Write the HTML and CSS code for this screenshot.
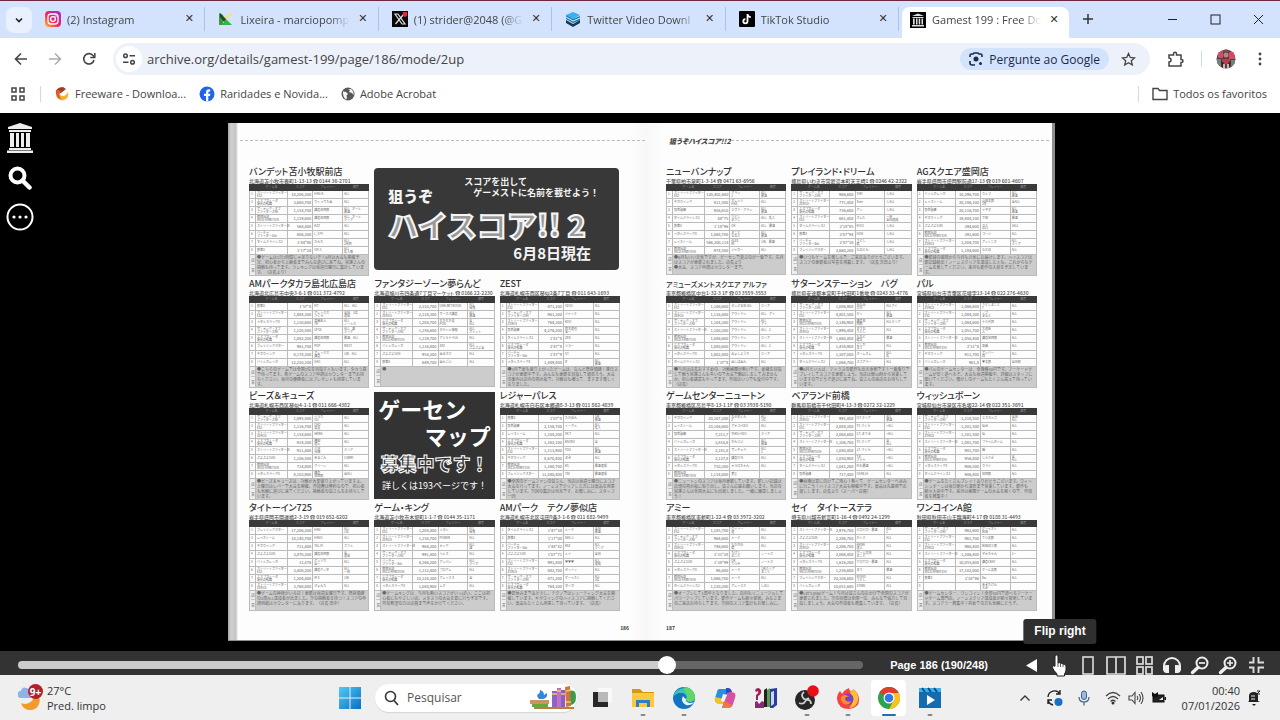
FILE: index.html
```
<!DOCTYPE html>
<html lang="pt-BR">
<head>
    <meta charset="UTF-8">
    <meta name="viewport" content="width=device-width, initial-scale=1.0">
    <title>Gamest 199 : Free Download</title>
    <link rel="stylesheet" href="styles.css">
</head>
<body>
    <!-- Tab strip -->
    <header class="tabstrip">
        <button class="tab-search" aria-label="Pesquisar guias"><svg width="10" height="10" viewBox="0 0 10 10"><path d="M2 3.5l3 3 3-3" fill="none" stroke="#222" stroke-width="1.6"/></svg></button>
        <nav class="tabs">
            <div class="tab">
                <svg width="16" height="16" viewBox="0 0 16 16"><defs><linearGradient id="ig" x1="0" y1="1" x2="1" y2="0"><stop offset="0" stop-color="#fdc02f"/><stop offset=".45" stop-color="#f5225c"/><stop offset="1" stop-color="#9b2be0"/></linearGradient></defs><rect width="16" height="16" rx="4" fill="url(#ig)"/><rect x="3" y="3" width="10" height="10" rx="3" fill="none" stroke="#fff" stroke-width="1.3"/><circle cx="8" cy="8" r="2.4" fill="none" stroke="#fff" stroke-width="1.3"/><circle cx="11" cy="5" r=".8" fill="#fff"/></svg>
                <a href="#" class="tab-title">(2) Instagram</a>
                <button class="tab-close" aria-label="Fechar"></button>
            </div>
            <div class="tab">
                <svg width="16" height="16" viewBox="0 0 16 16"><path d="M1 2l4 2v10H1z" fill="#3d9a3f"/><path d="M4 9l8-7h3L8 9z" fill="#f7e36a"/><path d="M4 14l4-6 6 6z" fill="#34b34a"/><path d="M2 2l6 6-2 3-4-5z" fill="#1d4f27"/></svg>
                <a href="#" class="tab-title">Lixeira - marciopomp</a>
                <button class="tab-close" aria-label="Fechar"></button>
            </div>
            <div class="tab">
                <svg width="16" height="16" viewBox="0 0 16 16"><rect width="16" height="16" fill="#080808"/><path d="M3 3h3l7 10h-3z" fill="none" stroke="#ddd" stroke-width="1.2"/><path d="M12 3L3.5 13" stroke="#ddd" stroke-width="1.3"/><path d="M11 1h4v4l-2 1-2-1z" fill="#e8243c"/></svg>
                <a href="#" class="tab-title">(1) strider@2048 (@G</a>
                <button class="tab-close" aria-label="Fechar"></button>
            </div>
            <div class="tab">
                <svg width="16" height="16" viewBox="0 0 16 16"><path d="M8 1l7 3-7 4-7-4z" fill="#35b3ee"/><path d="M1 4l7 4 7-3v4l-7 3-7-4z" fill="#1478ba"/><path d="M1 6l7 4 7-3" fill="none" stroke="#e3f3ff" stroke-width="1"/><path d="M1 9l7 4 7-4v3l-7 4-7-4z" fill="#123a5c"/></svg>
                <a href="#" class="tab-title">Twitter Video Downl</a>
                <button class="tab-close" aria-label="Fechar"></button>
            </div>
            <div class="tab">
                <svg width="16" height="16" viewBox="0 0 16 16"><rect width="16" height="16" rx="1" fill="#000"/><path d="M8.5 3v7.3a2.1 2.1 0 1 1-2.1-2.1M8.500 3.500q.8 2.500 3.300 2.600" fill="none" stroke="#fff" stroke-width="1.8"/></svg>
                <a href="#" class="tab-title">TikTok Studio</a>
                <button class="tab-close" aria-label="Fechar"></button>
            </div>
            <div class="tab active">
                <svg width="16" height="16" viewBox="0 0 16 16"><rect width="16" height="16" fill="#000"/><path d="M8 1.500l6 2.500H2zM2.500 5h11v1h-11zM3 6.500h1.700v6H3zM6 6.500h1.500v6H6zM8.700 6.500h1.500v6H8.700zM11.500 6.500H13v6h-1.500zM2 13h12v1.500H2z" fill="#ddd"/></svg>
                <a href="#" class="tab-title">Gamest 199 : Free Do</a>
                <button class="tab-close" aria-label="Fechar"></button>
            </div>
        </nav>
        <button class="new-tab" aria-label="Nova guia"><svg width="12" height="12" viewBox="0 0 12 12"><path d="M6 1v10M1 6h10" stroke="#333" stroke-width="1.500"/></svg></button>
        <div class="win-buttons">
            <button aria-label="Minimizar"><svg width="11" height="11" viewBox="0 0 11 11"><path d="M1 5.500h9" stroke="#222"/></svg></button>
            <button aria-label="Maximizar"><svg width="11" height="11" viewBox="0 0 11 11"><rect x="1" y="1" width="9" height="9" fill="none" stroke="#222"/></svg></button>
            <button aria-label="Fechar janela"><svg width="11" height="11" viewBox="0 0 11 11"><path d="M1 1l9 9M10 1l-9 9" stroke="#222"/></svg></button>
        </div>
    </header>

    <!-- Address bar -->
    <div class="toolbar">
        <button class="tool" aria-label="Voltar"><svg width="14" height="14" viewBox="0 0 14 14"><path d="M13 7H2M7 1.500L1.500 7 7 12.500" fill="none" stroke="#444" stroke-width="1.600"/></svg></button>
        <button class="tool" aria-label="Avançar"><svg width="14" height="14" viewBox="0 0 14 14"><path d="M1 7h11M7 1.500L12.500 7 7 12.500" fill="none" stroke="#aaa" stroke-width="1.500"/></svg></button>
        <button class="tool" aria-label="Recarregar"><svg width="14" height="14" viewBox="0 0 14 14"><path d="M12 8a5.200 5.200 0 1 1-1.200-4.700L12.500 5" fill="none" stroke="#444" stroke-width="1.600"/><path d="M12.800 1v4.500H8.300" fill="none" stroke="#444" stroke-width="1.500"/></svg></button>
        <div class="omnibox">
            <button class="site-info" aria-label="Informações do site"><svg width="14" height="14" viewBox="0 0 14 14"><g fill="none" stroke="#444" stroke-width="1.500"><circle cx="3.500" cy="3.800" r="1.800"/><path d="M7.500 3.800H13M1 10.200h5.500"/><circle cx="10.500" cy="10.200" r="1.800"/></g></svg></button>
            <input type="text" class="url" aria-label="Endereço" value="archive.org/details/gamest-199/page/186/mode/2up">
            <button class="ask"><svg width="14" height="14" viewBox="0 0 14 14"><g fill="none" stroke="#1b2a4a" stroke-width="1.600"><path d="M1 5V3.500Q1 2 2.500 2H4l1-1h4l1 1h1.500Q13 2 13 3.500V5M1 9v2q0 2 2 2h3"/></g><circle cx="7" cy="7" r="2.500" fill="#1b2a4a"/><circle cx="11.500" cy="11.500" r="1.500" fill="#1b2a4a"/></svg>Pergunte ao Google</button>
            <button class="star" aria-label="Favoritar"><svg width="15" height="15" viewBox="0 0 15 15"><path d="M7.500 1.500l1.800 4 4.300.4-3.300 2.900 1 4.200-3.800-2.300L3.700 13l1-4.200L1.400 5.900l4.300-.4z" fill="none" stroke="#444" stroke-width="1.300"/></svg></button>
        </div>
        <button class="tool ext" aria-label="Extensões"><svg width="17" height="17" viewBox="0 0 17 17"><path d="M2 4h4.500V2.800a1.500 1.500 0 0 1 3 0V4H14v4.500h.5a1.500 1.500 0 0 1 0 3H14V15H2v-4a2 2 0 0 0 0-4z" fill="none" stroke="#444" stroke-width="1.500"/></svg></button>
        <span class="divider"></span>
        <button class="tool avatar" aria-label="Perfil"><svg width="20" height="20" viewBox="0 0 20 20"><defs><clipPath id="av"><circle cx="10" cy="10" r="9.500"/></clipPath></defs><g clip-path="url(#av)"><rect width="20" height="20" fill="#5a3a40"/><path d="M2 2h5v7H2zM13 3h6v7h-6z" fill="#d24a66"/><path d="M7 0h6v3H7z" fill="#7a4a50"/><path d="M1 10h4v8H1zM15 11h4v7h-4z" fill="#6c8578"/><circle cx="10" cy="6" r="2.500" fill="#b98675"/><path d="M6 10h8v5H6z" fill="#b83b50"/><path d="M5 12l3 2-2 5zM15 12l-3 2 2 5z" fill="#2e2528"/><path d="M7 15h2v5H7zM11 15h2v5h-2z" fill="#cdb5a5"/></g></svg></button>
        <button class="tool menu" aria-label="Menu"><svg width="4" height="14" viewBox="0 0 4 14"><g fill="#444"><circle cx="2" cy="2" r="1.400"/><circle cx="2" cy="7" r="1.400"/><circle cx="2" cy="12" r="1.400"/></g></svg></button>
    </div>

    <!-- Bookmarks -->
    <nav class="bookmarks">
        <button class="apps" aria-label="Apps"><svg width="14" height="14" viewBox="0 0 14 14"><g fill="none" stroke="#444" stroke-width="1.500"><rect x="1" y="1" width="4" height="4"/><rect x="9" y="1" width="4" height="4"/><rect x="1" y="9" width="4" height="4"/><rect x="9" y="9" width="4" height="4"/></g></svg></button>
        <span class="divider"></span>
        <a href="#"><svg width="16" height="16" viewBox="0 0 16 16"><path d="M9 1C4 1 1 4 2 8l5-1 5-4z" fill="#a83a24"/><path d="M2 8c0 5 4 7 8 6s5-5 4-8c-2 4-5 5-8 3z" fill="#f2b530"/><path d="M3 4c-2 4 0 9 5 9-3-2-3-5-1-8z" fill="#e25f2c"/></svg>Freeware - Downloa...</a>
        <a href="#"><svg width="16" height="16" viewBox="0 0 16 16"><circle cx="8" cy="8" r="7.500" fill="#2065e8"/><path d="M7 15.500V10H5V7.700h2V6.200q0-2.900 2.900-2.900l1.300.1v2h-.9q-1 0-1 1v1.300h2L11 10H9.300v5.400z" fill="#fff"/></svg>Raridades e Novida...</a>
        <a href="#"><svg width="14" height="14" viewBox="0 0 14 14"><circle cx="7" cy="7" r="6.500" fill="#55585c"/><path d="M2 4.500l3 .5 2 2-1.500 1.500L6 11l-1 1.500Q1.500 10 2 4.500zM7 2l2 1-1 2 3 1 1.500 2Q13 4 10 2z" fill="#f6f6f6"/></svg>Adobe Acrobat</a>
        <span class="divider push"></span>
        <a href="#" class="all"><svg width="16" height="14" viewBox="0 0 16 14"><path d="M1 12.500V1.500h5l1.500 2H15v9z" fill="none" stroke="#444" stroke-width="1.400"/></svg>Todos os favoritos</a>
    </nav>

    <!-- Book reader -->
    <main class="reader">
        <aside class="side">
            <a href="#" aria-label="Internet Archive"><svg width="28" height="30" viewBox="0 0 28 30"><path d="M14 0l12 4v2H2V4zM3 7h22v2H3zM4 10h4v14H4zM10 10h3v14h-3zM15 10h3v14h-3zM20 10h4v14h-4zM3 25h22v2H3zM1 27.500h26V30H1z" fill="#eee"/></svg></a>
            <button aria-label="Pesquisar no livro"><svg width="24" height="24" viewBox="0 0 24 24"><circle cx="9.500" cy="9.500" r="7" fill="none" stroke="#fff" stroke-width="4"/><path d="M14.500 14.500l7 7" stroke="#fff" stroke-width="4.500" stroke-linecap="round"/></svg></button>
            <button aria-label="Mais opções"><svg width="28" height="28" viewBox="0 0 28 28"><circle cx="14" cy="14" r="12.500" fill="none" stroke="#fff" stroke-width="2"/><g fill="#fff"><circle cx="8" cy="14" r="1.600"/><circle cx="14" cy="14" r="1.600"/><circle cx="20" cy="14" r="1.600"/></g></svg></button>
        </aside>

        <div class="book" lang="ja">
            <section class="page page-left">
                <div class="page-head"><span class="rule"></span></div>
                <div class="shops" id="left">
                    <div class="banner">
                        <p class="banner-lead"><b>狙うぞ</b><span>スコアを出して<br>　ゲーメストに名前を載せよう！</span></p>
                        <h1>ハイスコア!! 2</h1>
                        <p class="banner-date">6月8日現在</p>
                    </div>
                    <div class="poster">
                        <p class="poster-big">ゲーセン</p>
                        <p class="poster-big right">マップ</p>
                        <p class="poster-outline">募集中です！</p>
                        <p class="poster-small">詳しくは193ページです！</p>
                    </div>
                </div>
                <div class="page-foot">186</div>
            </section>
            <section class="page page-right">
                <div class="page-head"><em>狙うぞハイスコア!!2</em><span class="rule"></span></div>
                <div class="shops" id="right"></div>
                <div class="page-foot">187</div>
            </section>
        </div>
    </main>

    <!-- Reader controls -->
    <div class="controls">
        <input type="range" class="scrub" min="1" max="248" value="192" aria-label="Página">
        <span class="page-label">Page 186 (190/248)</span>
        <div class="control-buttons">
            <button aria-label="Flip left"><svg width="20" height="20" viewBox="0 0 20 20"><path d="M15 4v13L4 10.500z" fill="#fff"/></svg></button>
            <button class="flip-right" aria-label="Flip right">
                <svg width="20" height="20" viewBox="0 0 20 20"><path d="M6 5v11l9-5.500z" fill="#fff"/></svg>
                <span class="tooltip">Flip right</span>
                <svg class="cursor" width="18" height="24" viewBox="0 0 18 24"><path d="M4 2q1.500-2 3 0V9q1.500-1 2.500.5 1.500-1 2.500.7 2.500-.7 3 1.800v4q0 2-1.500 4v2H6v-2q-3-3-5-7 .5-2 3-.8z" fill="#fff" stroke="#222"/><path d="M7 9v4M9.500 10v3M12 10.500V13" stroke="#333" stroke-width=".8"/></svg>
            </button>
            <button aria-label="One page"><svg width="20" height="20" viewBox="0 0 20 20"><rect x="5" y="2" width="10" height="17" fill="none" stroke="#ddd" stroke-width="1.600"/></svg></button>
            <button aria-label="Two pages"><svg width="20" height="20" viewBox="0 0 20 20"><path d="M1 2h18v17H1zM10 2v17" fill="none" stroke="#ddd" stroke-width="1.700"/></svg></button>
            <button aria-label="Thumbnails"><svg width="20" height="20" viewBox="0 0 20 20"><g fill="none" stroke="#ddd" stroke-width="1.700"><rect x="3" y="2" width="6" height="7"/><rect x="12" y="2" width="6" height="7"/><rect x="3" y="12" width="6" height="7"/><rect x="12" y="12" width="6" height="7"/></g></svg></button>
            <button aria-label="Read aloud"><svg width="20" height="20" viewBox="0 0 20 20"><path d="M2 15v-4a8 8 0 0 1 16 0v4" fill="none" stroke="#eee" stroke-width="2"/><path d="M4 10h3v8H4q-3-1-3-4 0-3 3-4zM16 10h-3v8h3q3-1 3-4 0-3-3-4z" fill="#eee"/></svg></button>
            <button aria-label="Zoom out"><svg width="20" height="20" viewBox="0 0 20 20"><circle cx="12" cy="8" r="5.500" fill="none" stroke="#eee" stroke-width="2"/><path d="M8 12.500L2.500 17.500" stroke="#eee" stroke-width="3.400" stroke-linecap="round"/><path d="M9 8h6" stroke="#eee" stroke-width="1.700"/></svg></button>
            <button aria-label="Zoom in"><svg width="20" height="20" viewBox="0 0 20 20"><circle cx="12" cy="8" r="5.500" fill="none" stroke="#eee" stroke-width="2"/><path d="M8 12.500L2.500 17.500" stroke="#eee" stroke-width="3.400" stroke-linecap="round"/><path d="M9 8h6M12 5v6" stroke="#eee" stroke-width="1.700"/></svg></button>
            <button aria-label="Exit fullscreen"><svg width="20" height="20" viewBox="0 0 20 20"><path d="M7.500 2v5.500H3M12.500 2v5.500H18M7.500 18v-5.500H3M12.500 18v-5.500H18" fill="none" stroke="#ddd" stroke-width="1.900"/></svg></button>
        </div>
    </div>

    <!-- Taskbar -->
    <footer class="taskbar">
        <button class="weather">
            <svg width="26" height="28" viewBox="0 0 26 28"><path d="M16 10a9 9 0 0 1-13 9 9.500 9.500 0 0 0 18 1q3-6-5-10z" fill="#f29a2c"/><path d="M3 14a3.500 3.500 0 0 1 0-7q1-5 6-3 4 3 4 10z" fill="#8fb2e8"/><circle cx="17.500" cy="7.500" r="7.500" fill="#b3202c"/><text x="17.500" y="11.500" text-anchor="middle" class="badge-text">9+</text></svg>
            <span>27°C<br>Pred. limpo</span>
        </button>
        <div class="task-center">
            <button class="start" aria-label="Iniciar"><svg width="22" height="22" viewBox="0 0 22 22"><defs><linearGradient id="w" x2="1" y2="1"><stop offset="0" stop-color="#4fcaf5"/><stop offset="1" stop-color="#0a6fc2"/></linearGradient></defs><path d="M0 0h10.500v10.500H0zM11.500 0H22v10.500H11.500zM0 11.500h10.500V22H0zM11.500 11.500H22V22H11.500z" fill="url(#w)"/></svg></button>
            <label class="search">
                <svg width="15" height="16" viewBox="0 0 15 16"><circle cx="6.500" cy="6.500" r="5" fill="none" stroke="#333" stroke-width="1.600"/><path d="M10 10.500l4 4.500" stroke="#333" stroke-width="1.700"/></svg>
                <input type="text" placeholder="Pesquisar">
                <svg width="46" height="24" viewBox="0 0 46 24"><path d="M0 14h19v4H0z" fill="#c89460"/><path d="M2 18h16v3H2z" fill="#66a63d"/><path d="M4 21h40v2H4z" fill="#b87c45"/><path d="M9 13q-3-3-1-5 2 0 2-4 4 1 4 5l3-2q1 5-4 6z" fill="#3188d4"/><path d="M40 5q6-2 6 6t-6 8z" fill="#3f9a4b"/><path d="M22 5h5v16h-5z" fill="#8d62c9"/><path d="M27 2h4v19h-4z" fill="#c36fc3"/><path d="M31 4h4v17h-4z" fill="#8a5fc4"/><path d="M35 1l5-1 1 20-5 1z" fill="#cf743a"/><path d="M22 8h5M27 5h4M31 8h4M36 5l5-1M36 16h5" stroke="#f2c65d" stroke-width="1.500"/></svg>
            </label>
            <button class="app task-view" aria-label="Visão de tarefas"><svg width="24" height="24" viewBox="0 0 24 24"><path d="M3 6h15v15H3z" fill="#282828"/><path d="M8 2h14v14H8z" fill="#f9f9f9"/><path d="M8 6h10v10H8z" fill="#b9b9b9"/></svg></button>
            <button class="app open" aria-label="Explorador"><svg width="24" height="24" viewBox="0 0 24 24"><path d="M1 3h8l3 3h11v7H1z" fill="#d69713"/><path d="M1 7h22v14H1z" fill="#fbc93f"/><path d="M5 14h14v7H5z" fill="#2d80c3"/><path d="M8 17h8v4H8z" fill="#fbc93f"/></svg></button>
            <button class="app open" aria-label="Edge"><svg width="24" height="24" viewBox="0 0 24 24"><circle cx="12" cy="12" r="11" fill="#1474c4"/><path d="M1 12C2 0 22-2 23 11c0 6-8 6-9 3 2-4-1-7-5-7s-7 2-8 5z" fill="#37c7b3"/><path d="M12 1q10 1 11 10c0 5-6 6-9 3 3-5-2-8-2-13z" fill="#62d768"/><path d="M11 10q-3 6 3 9 5 1 8-3-4 2-7 0-2-1-1-3-2-1-3-3z" fill="#e6f4fb"/></svg></button>
            <button class="app" aria-label="Copilot"><svg width="24" height="24" viewBox="0 0 24 24"><path d="M6 3h9l-4 14H6q-5 0-4-5l2-6q.5-3 2-3z" fill="#2a8fe0"/><path d="M2 11q-1 7 4 7h4l2-5z" fill="#f3bf2d"/><path d="M13 2h2q3 0 4 4l-6 2z" fill="#274cc4"/><path d="M18 6q6 0 4 6l-2 6q-1 4-5 4H9l4-12q1-4 5-4z" fill="#d8509f"/><path d="M11 15l-2 7h6q3 0 4-3z" fill="#f27640"/><path d="M10 8l4 1-3 7-3-1z" fill="#eef5fb"/></svg></button>
            <button class="app" aria-label="Jogos"><svg width="24" height="24" viewBox="0 0 24 24"><path d="M1 4q3-4 6 0 1 4-3 6v4H2V9q3-2 2-4L2 6z" fill="#a21e54"/><path d="M1 22V16l2-1 2 3 3-3 2 1v6z" fill="#882b77"/><path d="M10 4l3-2v19h-3z" fill="#222"/><path d="M13 4l3-2v19h-3z" fill="#5c9c50"/><path d="M16 3l7-1v17l-4 3h-3z" fill="#2b3c9d"/><path d="M17 6l3-1v13l-3 2z" fill="#c8d5ef"/></svg></button>
            <button class="app open" aria-label="OBS"><svg width="24" height="26" viewBox="0 0 24 26"><circle cx="10" cy="15" r="10" fill="#272727"/><g fill="none" stroke="#d0d0d0" stroke-width="1.800"><path d="M9 7q-4 3 0 7 3 1 5-1M4 18q5 2 7-3M16 19q0-5-5-4"/></g><circle cx="18" cy="6" r="5.800" fill="#e70e18"/></svg></button>
            <button class="app open" aria-label="Firefox"><svg width="24" height="24" viewBox="0 0 24 24"><path d="M4 5l2 3q2-4 7-6 0 3 4 4V3q6 4 6 11 0 8-10 9Q2 23 1 13q0-5 3-8z" fill="#f5433d"/><path d="M17 3q6 4 5 11-1 7-9 8 7-7 1-16z" fill="#ffbe35"/><circle cx="12" cy="13" r="5.500" fill="#7a42c9"/><path d="M5 11q4-4 8 0-4-1-4 2 1 4 6 2-2 5-7 3-4-3-3-7z" fill="#ff8c2c"/></svg></button>
            <button class="app open current" aria-label="Chrome"><svg width="24" height="24" viewBox="0 0 24 24"><circle cx="12" cy="12" r="11" fill="#2ba24c"/><path d="M12 12L2.500 6.500A11 11 0 0 1 21.500 6.500z" fill="#e33b2e"/><path d="M12 7h10a11 11 0 0 1-10 16l5-9z" fill="#fbc31a"/><circle cx="12" cy="12" r="5.500" fill="#fff"/><circle cx="12" cy="12" r="4.300" fill="#2f79e8"/></svg></button>
            <button class="app open" aria-label="Filmes e TV"><svg width="24" height="24" viewBox="0 0 24 24"><path d="M1 2h22v20H1z" fill="#156bb0"/><path d="M1 2h22v4H1z" fill="#3ab2e7"/><path d="M4 2l3 4M10 2l3 4M16 2l3 4" stroke="#0b4b86" stroke-width="2"/><path d="M9 9l8 5-8 5z" fill="#fff"/></svg></button>
        </div>
        <div class="tray">
            <svg width="12" height="12" viewBox="0 0 12 12"><path d="M1.500 8.500L6 4l4.500 4.500" fill="none" stroke="#333" stroke-width="1.300"/></svg>
            <svg class="sync" width="18" height="18" viewBox="0 0 18 18"><path d="M2 8a6.500 6.500 0 0 1 12-3M14 1v4h-4M2 11q1 4 5 5M2 15v-4h4" fill="none" stroke="#222" stroke-width="1.400"/><circle cx="12.500" cy="13" r="4" fill="#1770c4"/></svg>
            <svg class="mic" width="14" height="16" viewBox="0 0 14 16"><rect x="4.500" y="1" width="5" height="8.500" rx="2.500" fill="#9db9e0" stroke="#3d5c8d"/><path d="M2 7q0 5 5 5t5-5M7 12v3.500" fill="none" stroke="#3d5c8d" stroke-width="1.200"/></svg>
            <svg width="16" height="14" viewBox="0 0 16 14"><g fill="none" stroke="#444" stroke-width="1.200"><path d="M1 5q7-7 14 0M3 8q5-5 10 0M5.500 10.500q2.500-2.500 5 0"/></g><circle cx="8" cy="12" r="1.500" fill="#333"/></svg>
            <svg width="16" height="14" viewBox="0 0 16 14"><path d="M1 5h3l3-3.500v11L4 9H1zM9 5q1.500 2 0 4M11 3q3 4 0 8M13 1q4 6 0 12" fill="none" stroke="#444" stroke-width="1.100"/></svg>
            <svg width="16" height="14" viewBox="0 0 16 14"><rect x="2" y="4" width="11" height="7" fill="#222" stroke="#111"/><path d="M13.500 6H15v3h-1.500z" fill="#111"/><path d="M1 1l3 2 3-2v4L4 7 1 5z" fill="#111"/><path d="M8 9l4-3v3z" fill="#eee"/></svg>
            <time class="clock">00:40<br>07/01/2026</time>
            <svg width="14" height="16" viewBox="0 0 14 16"><path d="M2 11V6q0-4 5-4 4 0 4 4v5l2 1H1z" fill="#222"/><path d="M5 14h4l-2 2z" fill="#222"/><path d="M4 6h4M4 9h4" stroke="#eee"/><path d="M10 1h3l-3 3h3" fill="none" stroke="#222"/></svg>
        </div>
    </footer>

    <script src="shops.js"></script>
</body>
</html>
```
FILE: styles.css
```
* {
    box-sizing: border-box;
}

body {
    display: flex;
    flex-direction: column;
    min-height: 100vh;
    margin: 0;
    background-color: #000;
    color: #444;
    font-family: "Open Sans", "Noto Sans", sans-serif;
    font-size: 12px;
}

button {
    display: flex;
    align-items: center;
    justify-content: center;
    padding: 0;
    border: 0;
    background: none;
    color: inherit;
    font: inherit;
    cursor: pointer;
}

a {
    color: inherit;
    text-decoration: none;
}

input {
    min-width: 0;
    border: 0;
    outline: 0;
    background: none;
    color: inherit;
    font: inherit;
}

svg {
    display: block;
    flex: none;
}

p, h1, h2 {
    margin: 0;
}

/* Tab strip */
.tabstrip {
    display: flex;
    height: 38px;
    padding: 6px 0 0 6px;
    border-top: 1px solid #6a2940;
    background-color: #d4e3fd;
}

.tab-search {
    width: 26px;
    height: 26px;
    border-radius: 8px;
    background-color: #e9f1fe;
}

.tabs {
    display: flex;
    flex: 0 1 1037px;
    min-width: 0;
}

.tab {
    display: flex;
    flex: 1;
    align-items: center;
    min-width: 0;
    height: 24px;
    padding: 0 8px 0 13px;
    border-right: 1px solid #a9c3ec;
}

.tab.active {
    height: 31px;
    padding: 0 8px 6px;
    margin-left: 3px;
    border: 0;
    border-radius: 8px 8px 0 0;
    background-color: #fff;
    flex: 0 0 167px;
}

.tab-title {
    flex: 1;
    margin: 0 6px;
    overflow: hidden;
    white-space: nowrap;
    font-size: 11px;
    -webkit-mask-image: linear-gradient(to left, transparent, #000 20px);
    mask-image: linear-gradient(to left, transparent, #000 20px);
}

.tab-close {
    width: 14px;
    height: 14px;
}

.tab-close::before {
    content: "✕";
    color: #333;
    font-family: "DejaVu Sans", sans-serif;
    font-size: 11px;
    line-height: 14px;
}

.new-tab {
    width: 38px;
    height: 24px;
}

.win-buttons {
    display: flex;
    margin-left: auto;
}

.win-buttons button {
    width: 43px;
    height: 24px;
}

/* Toolbar */
.toolbar {
    display: flex;
    align-items: center;
    height: 42px;
    padding: 0 10px 0 4px;
    background-color: #fff;
}

.tool {
    width: 34px;
    height: 30px;
}

.omnibox {
    display: flex;
    flex: 1;
    align-items: center;
    height: 32px;
    margin: 0 8px 0 7px;
    padding: 0 14px 0 3px;
    border-radius: 16px;
    background-color: #edf1fa;
}

.site-info {
    width: 26px;
    height: 26px;
    border-radius: 50%;
    background-color: #fff;
}

.url {
    flex: 1;
    padding: 0 5px;
    font-size: 13px;
}

.ask {
    gap: 6px;
    height: 22px;
    margin-right: 12px;
    padding: 0 9px;
    border-radius: 11px;
    background-color: #d4e3fc;
    color: #1b2a4a;
    font-weight: 500;
}

.ext {
    margin-right: 9px;
}

.divider {
    width: 1px;
    height: 16px;
    background-color: #c9daf5;
}

.avatar {
    width: 48px;
}

.menu {
    width: 20px;
}

/* Bookmarks */
.bookmarks {
    display: flex;
    align-items: center;
    height: 33px;
    padding: 0 13px 6px 11px;
    background-color: #fff;
    font-size: 11px;
}

.bookmarks a {
    display: flex;
    align-items: center;
    gap: 5px;
    margin-left: 13px;
}

.bookmarks .apps {
    margin-right: 15px;
}

.bookmarks .push {
    margin-left: auto;
}

/* Reader */
.reader {
    display: flex;
    flex: 1;
    padding: 10px 37px 10px 0;
    background-color: #000;
}

.side {
    display: flex;
    flex: none;
    flex-direction: column;
    align-items: center;
    gap: 13px;
    width: 40px;
}

.book {
    display: grid;
    grid-template-columns: 417fr 407fr;
    width: 100%;
    max-width: 827px;
    margin: 0 auto;
    border: solid #8f8f8f;
    border-width: 0 3px 1px 0;
    background-color: #fdfdfd;
    color: #444;
    font-family: "Noto Sans CJK JP", sans-serif;
}

.page {
    display: flex;
    flex-direction: column;
    min-width: 0;
}

.page-left {
    padding: 0 25px 0 21px;
    background: linear-gradient(to right, #a9a6a8 0, #d2cfd1 3px, #c6c3c5 8px, #fdfdfd 10px, #fdfdfd 96%, #f8f8f8);
}

.page-right {
    padding: 0 15px 0 21px;
    background: linear-gradient(to right, #f8f8f8, #fdfdfd 5%);
}

.page-head {
    display: flex;
    align-items: center;
    height: 43px;
    padding-bottom: 8px;
    margin-right: -12px;
}

.page-left .page-head {
    margin: 0 -25px 0 -9px;
}

.page-head em {
    margin-left: 3px;
    font-size: 7px;
    font-weight: 900;
    font-feature-settings: "palt";
}

.rule {
    flex: 1;
    border-top: 1px dashed #bbb;
}

.shops {
    display: grid;
    grid-template-columns: repeat(3, minmax(0, 1fr));
    gap: 2px 5px;
}

.page-foot {
    margin-top: 12px;
    color: #333;
    font-size: 5px;
    font-weight: 700;
    line-height: 9px;
}

.page-left .page-foot {
    margin-right: -9px;
    text-align: right;
}

/* One arcade: name, address, score table */
.shop h2 {
    height: 12px;
    color: #333;
    font-size: 9px;
    font-weight: 500;
    line-height: 12px;
    white-space: nowrap;
    font-feature-settings: "palt";
}

.shop h2.long {
    font-size: 7px;
}

.shop address {
    height: 6px;
    color: #555;
    font-size: 5px;
    font-style: normal;
    font-weight: 500;
    line-height: 5px;
    white-space: nowrap;
    font-feature-settings: "palt";
}

.scores {
    width: 100%;
    border: 1px solid #aaa;
    border-collapse: collapse;
    table-layout: fixed;
    color: #666;
    font-size: 3px;
    line-height: 3px;
}

.scores th,
.scores td {
    height: 8px;
    padding: 0 1px;
    border: 1px solid #bbb;
    text-align: left;
    white-space: nowrap;
}

.scores thead th {
    height: 6px;
    border-color: #3a3a3a;
    background-color: #3a3a3a;
    color: #999;
    font-weight: 400;
    text-align: center;
}

.scores .rank { width: 5%; }
.scores .game { width: 27%; }
.scores .score { width: 21%; }
.scores .name { width: 25%; }

.scores tbody .num {
    font-size: 4px;
    text-align: right;
}

.scores tfoot td {
    height: 20px;
    background-color: #ccc;
    font-size: 4px;
    line-height: 5px;
    vertical-align: top;
    white-space: normal;
}

.scores tfoot .label {
    background-color: #eee;
    vertical-align: middle;
}

.banner {
    grid-area: 1 / 2 / 2 / 4;
    margin: 2px 1px 6px 0;
    padding: 8px 14px 7px;
    border-radius: 4px;
    background-color: #383838;
    color: #f4f4f4;
    font-weight: 700;
}

.banner-lead {
    display: flex;
    gap: 20px;
    font-size: 9px;
    line-height: 11px;
}

.banner-lead b {
    padding-top: 12px;
    font-size: 15px;
    font-weight: 900;
    line-height: 16px;
}

.banner-lead span {
    margin-left: 11px;
    font-size: 9px;
}

.banner h1 {
    color: #999;
    font-size: 30px;
    font-weight: 900;
    line-height: 40px;
    white-space: nowrap;
    -webkit-text-stroke: 2px #f6f6f6;
}

.banner-date {
    padding-right: 14px;
    font-size: 15px;
    line-height: 18px;
    text-align: right;
}

.poster {
    grid-area: 3 / 2;
    margin: 2px 0 1px;
    padding: 3px 4px;
    background-color: #333;
    color: #fff;
    white-space: nowrap;
}

.poster-big {
    font-size: 22px;
    font-weight: 700;
    line-height: 27px;
}

.right {
    text-align: right;
}

.poster-outline {
    color: #333;
    font-size: 18px;
    font-weight: 900;
    line-height: 28px;
    text-align: center;
    -webkit-text-stroke: 1px #fff;
}

.poster-small {
    font-size: 9px;
    line-height: 17px;
    text-align: center;
}

/* Reader controls */
.controls {
    display: flex;
    align-items: center;
    height: 24px;
    padding: 4px 10px 0 18px;
    background-color: #333;
    color: #fff;
    font-family: "Liberation Sans", Arial, sans-serif;
}

.scrub {
    flex: 1;
    height: 20px;
    margin: 0 27px 0 0;
    -webkit-appearance: none;
    appearance: none;
}

.scrub::-webkit-slider-runnable-track {
    height: 8px;
    border-radius: 4px;
    background: linear-gradient(to right, #ccc 77%, #666 77%);
}

.scrub::-webkit-slider-thumb {
    width: 18px;
    height: 18px;
    margin-top: -5px;
    border-radius: 50%;
    background-color: #fff;
    -webkit-appearance: none;
    appearance: none;
}

.page-label {
    margin-right: 30px;
    font-size: 11px;
    font-weight: 700;
}

.control-buttons {
    display: flex;
}

.control-buttons button {
    width: 28px;
    height: 20px;
}

.flip-right {
    position: relative;
}

.flip-right > svg:first-child {
    visibility: hidden;
}

.tooltip {
    position: absolute;
    bottom: 31px;
    left: 50%;
    padding: 5px 11px;
    border-radius: 3px;
    background-color: #2f2f2f;
    font-size: 12px;
    font-weight: 700;
    line-height: 15px;
    white-space: nowrap;
    transform: translateX(-50%);
}

.cursor {
    position: absolute;
    top: -1px;
    left: 5px;
    z-index: 1;
}

/* Taskbar */
.taskbar {
    display: flex;
    align-items: center;
    justify-content: space-between;
    height: 45px;
    padding: 0 19px 0 18px;
    background-color: #efefef;
    color: #333;
    font-size: 11px;
}

.weather {
    flex: 1 0 0;
    justify-content: flex-start;
    gap: 3px;
    line-height: 15px;
    text-align: left;
}

.badge-text {
    fill: #fff;
    font-size: 10px;
    font-weight: 700;
}

.task-center {
    display: flex;
    align-items: center;
    padding-left: 10px;
}

.start {
    margin-right: 14px;
}

.search {
    display: flex;
    align-items: center;
    gap: 8px;
    width: 202px;
    height: 28px;
    margin-right: 4px;
    padding: 0 1px 0 9px;
    border-radius: 14px;
    background-color: #fff;
    box-shadow: 0 1px 1px #d5d5d5;
}

.search input {
    flex: 1;
    padding: 0;
    font-size: 12px;
}

.search input::placeholder {
    color: #555;
}

.app {
    position: relative;
    width: 35px;
    height: 36px;
    margin: 0 3px;
    border-radius: 4px;
}

.app.current {
    background-color: #fff;
}

/* running indicator below the icon */
.open::after {
    position: absolute;
    bottom: 0;
    left: 50%;
    width: 5px;
    height: 2px;
    border-radius: 1px;
    background-color: #888;
    content: "";
    transform: translateX(-50%);
}

.current::after {
    width: 14px;
    background-color: #1f6fbe;
}

.tray {
    display: flex;
    flex: 1 0 0;
    align-items: center;
    justify-content: flex-end;
    gap: 7px;
}

.sync {
    margin: 0 6px 0 8px;
}

.mic {
    margin: 0 7px 0 0;
}

.clock {
    margin-left: 8px;
    line-height: 15px;
    text-align: right;
}
```
FILE: shops.js
```
// rows: game code, score, player, note ("/" breaks the line, "_" is an empty cell)
const games = {
    sf: 'ストリートファイター/EX2', sz: 'ストリートファイター/ZERO3', s3: 'ストリートファイターⅢ', kf: 'ザ・キング・オブ/ファイターズ98',
    ms: 'メタルスラッグX', gw: 'ギガウイング', bt: 'バトルガレッガ', rs: 'レイストーム', dd: '怒首領蜂',
    ed: 'エスプガルーダ/旋光の輪舞', tk: '鉄拳3', vf: 'バーチャ/ファイター3tb', ps: 'ぷよぷよSUN', td: 'タイムクライシス2',
    ar: '餓狼伝説/WILD AMBITION', br: 'ブレイジングスター'
};

const left = [
    ['バンデット苫小牧駅前店', '北海道苫小牧市表町1-13-13 ☎ 0144 36-2701', 'sf 10,206,300 HAN-K ALL|ed 3,680,700 ウィメでたぬ ALL|kf 1,154,700 鎌倉狂四郎 ALL、オール/最速|ar 1,119,600 鎌倉狂四郎 ALL、オール/クリア|s3 564,400 KZZ ALL|vf 606,300 L_S74 ALL|td 3\'44"80 かんた ALL/2周目|tk 3\'17"28 GM-S ALL/乱入無', '●ゲームは1日1時間じゃ足りないぞ！6月は大会も開催予定、初心者から上級者までみんな遊びに来てね。常連さんの挑戦も待ってます。ランキングは毎週日曜日に集計しています。（店長より）'],
    ['AMパークタカラ島北広島店', '北海道北広島市中央3-6-1 ☎ 011 372-4792', 'tk 1\'57"8 MT ALL、ALL|sf 1,884,300 アレックス/さくら 全国、1位/達成|ms 1,130,600 高橋名人/TK ALL/ノーミス|kf 1,120,500 UFGE ALL、速/クリア|ed 1,082,200 鎌倉狂四郎 最速、ALL|br 961,700 POP WEST|gw 8,178,300 アレックス/鎌倉 1周、ALL|bt 12,220,100 HAG ALL', '●こちらのゲームでは全国1位を目指す人もいます。タカラ島で待ってます。各ゲームのスコア申請はカウンターまでお持ちください。毎月の優勝者にはプレゼントも用意しています。'],
    ['ファンタジーゾーン夢らんど', '北海道旭川市四条通7丁目マーケット ☎ 0166 22-2230', 'sf 2,310,700 UNK.BETW.YUN ALL/豪鬼|sz 2,118,300 サーカス鎌倉 ALL/最速|ed 1,208,700 ちかちか見/PON 全/ALL|kf 1,156,600 ダテハル優翔 ALL/ポイント|ar 1,119,700 アジョナラLA ALL|bt 1,116,800 ZAZ ALL/ぷよぷよ全|ps 954,300 ぬるすけ ALL|tk 649,700 ぬんごい ALL', '●'],
    ['ZEST', '北海道札幌市西区琴似2条7丁目 ☎ 011 643-1693', 'sf 871,100 GESO ALL|kf 961,300 ジャック ALL|sz 764,300 KOO ALL|dd 4,276,200 鈴木達也/全一 ALL|td 1\'41"8 ZEN ALL|ed 2\'47"8 ジョー ALL|vf 1\'47"9 GT ALL|ms 1,449,400 IF ALL/最速', '●5月で最も盛り上がったゲームは、なんと怒首領蜂！連日スコアが更新中です。みんなも更新を目指して頑張ろう。大会の案内は店内の掲示板で。対戦台も増えて、ますます楽しくなりました。'],
    ['ピーズ＆キューズ', '北海道札幌市西区琴似4-1-1 ☎ 011 666-4382', 'kf 1,095,500 リョウ/GO ALL|sf 1,116,700 CHO/高見 ALL|sz 1,154,600 AKIRA ALL|ed 914,300 横田/達人 ALL|s3 911,400 三沢/光晴 クリア|ps 1,106,500 あるごん CURRY|ar 714,800 グリーン ALL|ms 8,103,900 鎌倉/狂四郎 全ALL', '●ピーズ＆キューズは、対戦が大変盛り上がっていますよ。土曜日はレバーで大会を開催。参加費は無料なので、初心者も気軽に遊びに来てください。挑戦者の皆さんをお待ちしています。'],
    ['レジャーパレス', '北海道札幌市白石区本郷通8-3-13 ☎ 011 862-4839', 'tk 1\'07"8 たかぽん 1周/最速|dd 2,156,700 イーグル ALL/乱入|rs 1,108,200 MCT ALL|ed 1,162,100 KAORU 全|sf 1,113,900 YOU ALL/最速|gw 8,670,400 まき ALL|ar 1,160,700 KG 最速達成|br 11,040,400 TIN 最速達成', '●全国のゲームファンの皆さん、当店は毎週土曜日にスコア大会を行ってます。ノーミスでクリアした方には景品を用意しています。次回の集計は月末です、お楽しみに。スタッフ一同'],
    ['タイトーイン725', '岩手県盛岡市開運橋2-3-19 ☎ 019 652-6202', 'br 17,206,300 HAN ALL/1位|rs 10,140,700 HANG ALL|gw 711,400 TAL.M ファル|ps 3,870,300 鎌倉狂四郎 全/達成|bt 11,476 ゲンゾウ/全一 ALL|sf 3,408,200 鎌倉ケンタ ALL/一周|ed 1,204,400 IP-X 1周|sz 3,760,800 ぴょんた ALL', '●ゲームの神様がいる店！更新は毎週金曜日です。怒首領蜂の2周ALL達成者が出ました。次の挑戦者を待つ！スコアの申請用紙はカウンターにあります。（店長 田中）'],
    ['ゲーム・キング', '北海道苫小牧市木場町1-1-7 ☎ 0144 35-1171', 'sf 1,204,400 ツヨシ ALL/豪鬼|sz 1,150,700 POWER ALL|s3 964,300 キング ALL/速|kf 991,400 ヘルス ALL|vf 4,166,200 アンパン ALL/クリア|ar 1,112,400 プログレ ALL|ed 10,124,300 アレックス 全|ms 1,080,900 レオ ALL', '●ゲームキングは、今月も熱いスコアがいっぱい。ここは初心者にもやさしい店。メタスラの大会を夏に行う予定です。参加希望の方は店員まで声をかけてください。'],
    ['AMパーク　テクノ夢似店', '北海道札幌市北区屯田9条3-1-6 ☎ 011 682-9499', 'td 1\'47"38 ルーク 全国/最速|tk 1\'17"00 NAG.J ALL|vf 1\'44"42 KAZ ALL/クリア|ps 1\'07"71 ルイ 全国|sf 991,400 ▼▼▼ ALL/達成|sz 882,700 ゼットン ALL|kf 871,200 ゲーメスト ALL/2位|ed 764,100 タイガ ALL', '●夏休みまであと少し。テクノではシューティング大会を開催しています。ギガウイングのハイスコアに挑戦してください。景品もたくさん用意して待っています。（店長）']
];

const right = [
    ['ニューバンナップ', '千葉県柏市泉町1-3-14 ☎ 0471 63-6956', 'sf 120,402,600 アラン/J ALL/最速|gw 811,500 オレンジ/MAX ALL|dd 926,610 エヴァ・アラン ALL/最速|td 48"75 さとし/まさし ALL、乱入|tk 1\'18"96 OK ALL、最速|ms 1,068,700 まこと/なおと ALL/最速|rs 566,200,114 ALEX/RY 1周、最速|ar 974,500 ジャガー ALL', '●6月もいい天気ですが、ゲーセンで遊ぶのが一番です。先月はスコアが更新されました。店長より/●大会、スコア申請はカウンターまで。'],
    ['プレイランド・ドリーム', '福島県いわき市常磐湯本町天王崎1 ☎ 0246 42-2322', 'kf 966,600 TAM しALL|sz 771,400 Tom しALL|ed 756,600 アン しALL|sf 661,400 オレG 一周/全国達成|td 2\'18"85 KOGI しALL|tk 2\'07"94 HON しALL|vf 2\'47"38 さとし/健 しALL|br 3,660,200 なおとん しALL', '●いつもゲームを楽しんで、ご来店ありがとうございます。スコアの更新者は写真を掲載します。（店長 吉田より）'],
    ['AGスクエア盛岡店', '岩手県盛岡市盛岡駅前通17-13 ☎ 019 601-4607', 'bt 10,296,700 ウルフ ALL/最速|rs 20,186,100 山田太郎/2号 全ALL|dd 20,116,700 ヤマダ ALL/最速|gw 19,884,100 下田 最速|ps 394,600 メイ/浜口 1ALL|ar 391,600 コージ ALL|sz 3,204,700 アントニオ ALL/クリア|ed 1,184,600 なかの ALL', '●新緑の盛岡から今月も元気にお届けします。ハイスコアは新記録続出！ノーミスクリアを達成した人も。これからもゲームを愛してください。来月も新作の入荷を予定しています。'],
    ['アミューズメントスクエア アルファ', '東京都板橋区中台1-32-3 1F ☎ 03 3559-3553', 'sf 1,106,600 ダンぷる狂 ALL クリア|sz 1,116,400 アウトラン ALL、アイ|kf 1,104,300 アウトラン ALL/アイ|s3 1,100,200 アウトラン ALL、2|ar 1,086,600 アウトラン クリア|ed 1,080,600 アウトラン ALL、2|ms 1,002,400 みょしようり クリア|td 1\'37"8 ぬしばぬん ALL', '●今月は店長おすすめの、対戦格闘が熱いです。最強を目指して戦う常連さんも多いので大会で腕試しをしてみませんか。初心者講習もやってます。参加はいつでも受付中です。（店長）'],
    ['サターンステーション　バグ', '福島県安達郡本宮町千代田町1番地 ☎ 0243 33-4776', 'kf 1,086,900 みなみ/大将 ALLアイ|sf 4,801,500 かィ ALL/最速|ar 2,146,900 鎌倉狂/四郎 ALLクリア|sz 1,996,400 まさお/さとし ALL|s3 1,660,400 なおと/健太 最速|ed 1,454,900 よしだ/まさ ALL|ms 1,307,000 オーレオレ ALL/乱|td 1,066,700 スコアラー ALL', '●6月といえば、アトラスの新作も出る季節です！一番乗りでプレイしてスコアを更新しよう。当店は朝10時から営業していますのでどうぞ遊びに来てね。皆さんの来店をお待ちしています。'],
    ['パル', '宮城県仙台市青葉区花壇字13-14 ☎ 022 276-4630', 'sz 1,066,600 さとしまこと/T ALL|sf 1,084,300 ノブ/まなと ALL|kf 1,064,600 十三代目 ALL|ed 1,051,700 大道芸/人 ALL|s3 1,050,400 鎌倉狂四郎 ALL|ar 2\'31"8 高橋 ALL|gw 911,700 ボンバー/団 ALL|bt 901,8 ▼太郎 全国初', '●パルのゲームセンターは、全機種50円です。アーケードゲームが安く遊べるぞ。大会も毎週開催中、詳細はスタッフに聞いてください。懐かしのゲームもたくさん揃えて待っています。'],
    ['ゲームセンターニュートン', '東京都板橋区高島平8-13-1 1F ☎ 03 3938-5190', 'gw 20,107,200 おそ松くん/Z ALL/1位|rs 10,106,600 アキコ+GEO ALL|dd 7,311,7 TAKU+GEO クリア|bt 3,810,6 がんじい ALL/最速|s3 2,181,8 ザンギュラ ALL/2|ed 2,137,8 鎌倉ひろ ALL|ms 710,300 キョロちゃん ALL|ar 1,114,000 愛Q _', '●ニュートンのスコアは毎月更新しています。新しい記録は店頭の掲示板に貼り出し。皆さん応援お願いします。当店の常連さんは全国大会にも出場しました。一緒に練習しましょう！'],
    ['ベアランド前橋', '群馬県前橋市千代田町4-13-3 ☎ 0272 32-1229', 'sz 991,400 O.T クリア ALL/最速|sf 2,084,300 T.Y. さくら +ALL|kf 2,064,600 S.T. まさる +ALL|s3 1,106,700 T.Y. クリア 全/ALL|ar 1,080,400 J.T. さくら +ALL|ed 1,050,900 T.K./フミヤ +ALL|td 1,041,200 M.K.最速 +ALL|dd 717,400 GAMEJA ALL', '●前橋は夏に向けてご用心！熱くて、ゲームセンターへ涼みに行こう！ハイスコア大会も開催中です。景品は先着順でお渡しします。店長より（スーパー店員）'],
    ['ウィッシュボーン', '宮城県仙台市泉区市名坂22-14 ☎ 022 351-3691', 'kf 1,210,500 エスカルゴ 全国/ALL|sf 1,201,500 仙台 ALL|sz 1,101,500 仙 ALL|s3 1,081,700 プライムタイム ALL|ed 981,700 橋 ALL|ar 956,800 しらさぎ 全/ALL|ms 906,500 ウラジ ALL|td 906,400 狂四郎 ALL', '●ゲームをたくさんプレイ！ありがとうございます。ウィッシュボーンは毎日朝から深夜まで営業しています。新作も続々入荷中です。来月は格闘ゲームの大会を開くので、参加者を募集中！'],
    ['アミー', '東京都板橋区東新町1-22-4 ☎ 03 3972-3202', 'sf 1,185,700 ゲイリー/達 ALL|kf 964,600 ルーク ALL|sz 746,600 なかがわ/健 ALL|ed 2\'31"28 たけし/まこと ノーミス|ps 1\'38"99 OK/てつや ノーミス|ms 96,400 ルーク 1周クリア/まこと|ar 1,066,700 ルーク ALL|td 1,120,200 アレックス しALL', '●オープンして1周年となりました。店内もリニューアルしてパワーアップしています。新作ゲームも続々登場。みなさまのご来店お待ちしてます。次回のスコア集計もお楽しみに。'],
    ['セイ　タイトーステラ', '埼玉県川越市新富町1-16-4 ☎ 0492 24-1299', 's3 2,976,700 ピロピロ・最速 ALL/2|ps 2,286,700 かトク ALL|sz 2,266,700 AKIRA/達人 ALL|ed 2,066,400 ゲーム実況/まこと ALL|ms 1,616,200 ケロケロ・最速 ALL|ar 1,256,600 まさ 最速|br 20,106,600 MOMO/さとし ALL|bt 10,051,600 STARS ALL', '●Let\'s playゲーム！今月は皆さんのおかげで全国のスコアが更新されました。次の目標は全国一位、みんなで協力して目指しましょう。大会の参加者も募集しています。（店長）'],
    ['ワンコインA館', '秋田県秋田市山王臨海町4-17 ☎ 0188 31-4493', 'kf 962,600 ゲーメスト/秋田 ALL|sf 961,700 てつ太郎 ALL|sz 960,400 秋田の三郎 ALL|s3 1,206,400 マキちゃん 1ー|ed 10,055,600 鎌倉CRAY ALL|ar 17,102,000 ゲーム太郎 ALL|tk 3\'38"96 No. ALL|_ _ あきたけん/大会 _', '●ゲームセンター、ワンコイン！全部50円で遊べるアーケードゲーム専門店。ノーミスクリア達成者が続々登場しています。スコアラー募集中！初めての方も気軽にどうぞ。']
];

function lines(text) {
    return text === '_' ? '' : text.replace('/', '<br>');
}

function shopHtml([name, address, rows, comment]) {
    const body = rows.split('|').map((row, i) => {
        const [game, score, ...rest] = row.split(' ');
        const note = rest.length > 1 ? rest.pop() : '';
        return `<tr><td>${i + 1}</td><td>${lines(games[game] || '')}</td><td class="num">${lines(score)}</td><td>${lines(rest.join(' '))}</td><td>${lines(note)}</td></tr>`;
    }).join('');

    return `<article class="shop">
        <h2${name.length > 14 ? ' class="long"' : ''}>${name}</h2>
        <address>${address}</address>
        <table class="scores">
            <thead><tr><th class="rank"></th><th class="game">ゲーム名</th><th class="score">スコア</th><th class="name">プレイヤー</th><th>備考</th></tr></thead>
            <tbody>${body}</tbody>
            <tfoot><tr><td class="label">店<br>一<br>言</td><td colspan="4">${lines(comment)}</td></tr></tfoot>
        </table>
    </article>`;
}

document.getElementById('left').insertAdjacentHTML('beforeend', left.map(shopHtml).join(''));
document.getElementById('right').insertAdjacentHTML('beforeend', right.map(shopHtml).join(''));
```
